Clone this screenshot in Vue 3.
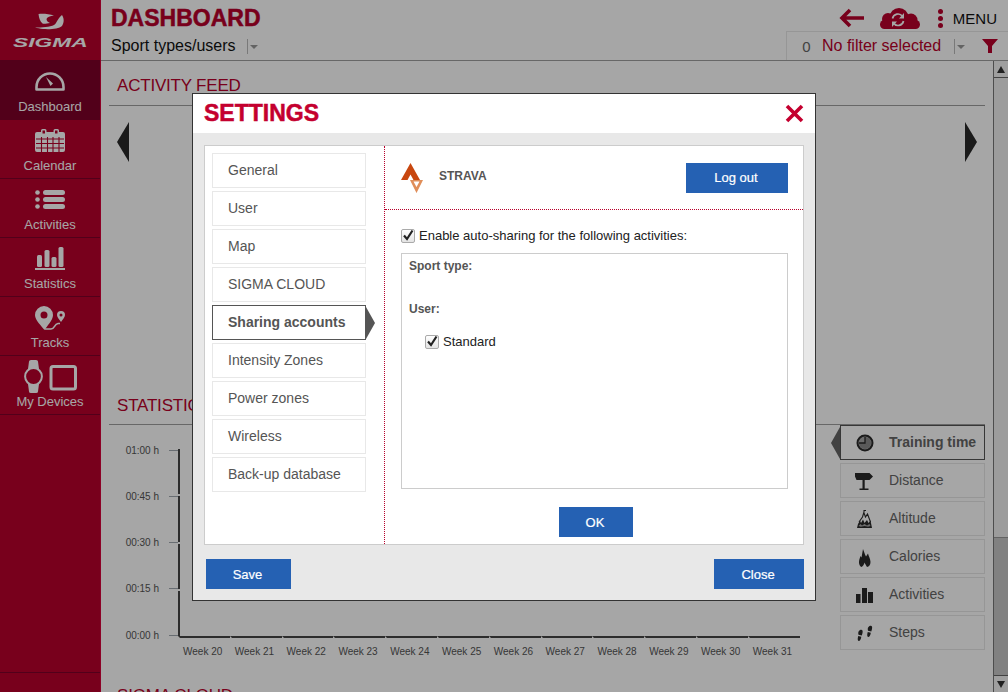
<script setup>
const nav = [
  { label: 'Dashboard', active: true, w: 30, h: 19, svg: '<path d="M1.500 17.500V15A13.500 13.500 0 0 1 28.500 15V17.500Z" fill="none" stroke="#fff" stroke-width="2.600" stroke-linejoin="round"/><path d="M11 5L18 11.500 15.500 14Z" fill="#fff"/>' },
  { label: 'Calendar', w: 30, h: 23, svg: '<path fill="#fff" d="M2 3H6V1.500A1.500 1.500 0 0 1 7.500 0H10A1.500 1.500 0 0 1 11.500 1.500V3H18.500V1.500A1.500 1.500 0 0 1 20 0H22.500A1.500 1.500 0 0 1 24 1.500V3H28A2 2 0 0 1 30 5V21A2 2 0 0 1 28 23H2A2 2 0 0 1 0 21V5A2 2 0 0 1 2 3Z"/><path d="M1 10H29M1 14.500H29M1 19H29M6.500 8V23M12.500 8V23M18 8V23M24 8V23" stroke="#b8002b" stroke-width="1.100"/><path d="M7.500 1.500H10V4.500H7.500ZM20 1.500H22.500V4.500H20Z" fill="#b8002b"/>' },
  { label: 'Activities', w: 30, h: 19, svg: '<circle cx="2.500" cy="2.500" r="2.300" fill="#fff"/><circle cx="2.500" cy="9.500" r="2.300" fill="#fff"/><circle cx="2.500" cy="16.500" r="2.300" fill="#fff"/><rect x="8" y="0" width="22" height="5" rx="2.500" fill="#fff"/><rect x="8" y="7" width="22" height="5" rx="2.500" fill="#fff"/><rect x="8" y="14" width="22" height="5" rx="2.500" fill="#fff"/>' },
  { label: 'Statistics', w: 30, h: 23, svg: '<rect x="2" y="8" width="5" height="12" rx="1.500" fill="#fff"/><rect x="9.500" y="3" width="5" height="17" rx="1.500" fill="#fff"/><rect x="16.500" y="10" width="5" height="10" rx="1.500" fill="#fff"/><rect x="23.500" y="0" width="5" height="20" rx="1.500" fill="#fff"/><rect x="0" y="21" width="30" height="2" fill="#fff"/>' },
  { label: 'Tracks', w: 30, h: 24, svg: '<path fill="#fff" fill-rule="evenodd" d="M9 0A9 9 0 0 1 18 9C18 14 12 20 9.500 24 6.500 20 0 14 0 9A9 9 0 0 1 9 0ZM9 5.500A3.500 3.500 0 1 0 9 12.500 3.500 3.500 0 0 0 9 5.500Z"/><path fill="#fff" fill-rule="evenodd" d="M26 5A4 4 0 0 1 30 9C30 11 27.500 14 26 16 24.500 14 22 11 22 9A4 4 0 0 1 26 5ZM26 7.500A1.500 1.500 0 1 0 26 10.500 1.500 1.500 0 0 0 26 7.500Z"/><path d="M10 23H16C20 23 19 18 23 17.500H25" fill="none" stroke="#fff" stroke-width="1.600"/>' },
  { label: 'My Devices', w: 53, h: 33, svg: '<path fill="#fff" d="M4 9L5 1.500Q5 0 7 0H12Q14 0 14 1.500L15 9ZM4 24H15L14 31.500Q14 33 12 33H7Q5 33 5 31.500Z"/><circle cx="9.500" cy="16.500" r="8.400" fill="#b8002b" stroke="#fff" stroke-width="2"/><rect x="27" y="6.500" width="24.500" height="22.500" rx="2" fill="none" stroke="#fff" stroke-width="3"/>' },
]

const tabs = [
  { label: 'Training time', active: true, svg: '<circle cx="10" cy="10" r="7.500" fill="#a8a8a8" stroke="#2a2a2a" stroke-width="2"/><path d="M10 10V4A6 6 0 0 1 10 16 6 6 0 0 1 4 10Z" fill="#8a8a8a"/><path d="M10 4V10H4" fill="none" stroke="#2a2a2a" stroke-width="1.300"/>' },
  { label: 'Distance', svg: '<path fill="#2a2a2a" d="M0 2H14.500L18 5.500 14.500 9H9.700V17.500H13.500V19H4.500V17.500H7.500V9H1.500L0 5.500Z"/>' },
  { label: 'Altitude', svg: '<path fill="none" stroke="#2a2a2a" stroke-width="1.100" d="M4 13L7.500 8 9 3V1.500H11M9 4L10.500 8 12.500 5 15.500 13"/><path fill="#2a2a2a" fill-rule="evenodd" d="M2 19L3 15 5 11.500 6 14 8 10.500 9.500 14 12 11 13.500 14 15.500 11.500 17 19Z"/><path fill="#a8a8a8" d="M3.500 17L5.500 15 7 16.500 9.500 15 12 16.500 14.500 15 15.500 17 13 17.800 9.500 17 6 17.800Z"/>' },
  { label: 'Calories', svg: '<path fill="#2a2a2a" d="M6.500 20C4 19 3.500 15 4.500 12L5.500 9 6.500 10.500 8 2 10 7.500 11 9.500 13 6.500C13.500 9 15.500 12 15.500 15 15.500 18 14 19.500 12 20 11 18 10 17 9.500 15.500 9 17.500 8 19 6.500 20Z"/>' },
  { label: 'Activities', svg: '<path fill="#2a2a2a" d="M1 9H5.500V18H1ZM7 3H12V18H7ZM13 7H18V18H13Z"/>' },
  { label: 'Steps', svg: '<path fill="#2a2a2a" d="M5 7C7.500 6 8 8 7.500 10L6.800 12.500 3.500 11.800C3 10 3.200 8 5 7ZM3.300 13L6.300 13.700C6 16 5 18 3.800 18 2.500 18 2.500 15 3.300 13ZM14.500 3C17 2 17.500 4 17 6L16.300 8.500 13 7.800C12.500 6 12.700 4 14.500 3ZM12.800 9L15.800 9.700C15.500 12 14.500 14 13.300 14 12 14 12 11 12.800 9Z"/>' },
]

const yLabels = ['01:00 h', '00:45 h', '00:30 h', '00:15 h', '00:00 h']
const weeks = Array.from({ length: 12 }, (_, i) => `Week ${20 + i}`)
const menu = ['General', 'User', 'Map', 'SIGMA CLOUD', 'Sharing accounts', 'Intensity Zones', 'Power zones', 'Wireless', 'Back-up database']
</script>

<template>
  <div class="app">
    <aside class="sidebar">
      <div class="logo">
        <svg class="swoosh" width="30" height="18" viewBox="0 0 30 18">
          <path fill="#fff" d="M3.500 1C8 0.500 14 1 19 2.500 15 3 12 4 11.500 6 11.500 8 13 9 15 10 12 10.500 9 11 7.500 10.500 5 8.500 4 5 3.500 1Z" />
          <path fill="#fff" d="M27 2C29 5 29.500 9 27 13 24 16 15 16.500 8 16 5.500 15.500 2 15 0 14.500 7 14.500 15 14 19 12 22 10 22 6 27 2Z" />
        </svg>
        <div class="brand">SIGMA</div>
      </div>
      <a v-for="n in nav" :key="n.label" class="nav-item" :class="{ active: n.active }">
        <span class="nav-icon">
          <svg :width="n.w" :height="n.h" :viewBox="`0 0 ${n.w} ${n.h}`" v-html="n.svg"></svg>
        </span>
        <span class="nav-label">{{ n.label }}</span>
      </a>
      <div class="sidebar-foot"></div>
    </aside>

    <div class="main">
      <header class="header">
        <div class="head-left">
          <h1 class="title">DASHBOARD</h1>
          <div class="picker">
            <span class="picker-text">Sport types/users</span>
            <span class="caret-box"></span>
          </div>
        </div>
        <div class="head-right">
          <div class="tools">
            <svg width="26" height="20" viewBox="0 0 26 20">
              <path d="M11 2L3 10 11 18M3 10H25" fill="none" stroke="#b8002b" stroke-width="3.600" />
            </svg>
            <svg class="cloud" width="40" height="21" viewBox="0 0 40 21">
              <g fill="#b8002b">
                <circle cx="8" cy="11" r="6" />
                <circle cx="19" cy="9.500" r="9.500" />
                <circle cx="31" cy="12" r="6.500" />
                <rect x="0" y="12" width="40" height="9" rx="4.500" />
              </g>
              <path d="M12.500 10.500A5.500 5.500 0 0 1 22.500 8.500M23.500 13A5.500 5.500 0 0 1 13.500 15" fill="none" stroke="#fff" stroke-width="1.700" />
              <path d="M24 5V10.500H19ZM12 19V13.500H17Z" fill="#fff" />
            </svg>
            <span class="dots"><i></i><i></i><i></i></span>
            <span class="menu-text">MENU</span>
          </div>
          <div class="filter">
            <span class="count">0</span>
            <span class="filter-text">No filter selected</span>
            <span class="caret-box"></span>
            <svg class="funnel" width="16" height="14" viewBox="0 0 16 14">
              <path fill="#b8002b" d="M0 0H16L10 7V14H6V7Z" />
            </svg>
          </div>
        </div>
      </header>

      <div class="below">
        <div class="content">
          <section class="feed">
            <h2 class="section-head">ACTIVITY FEED</h2>
            <div class="carousel">
              <span class="nav-arrow left"></span>
              <span class="nav-arrow right"></span>
            </div>
          </section>

          <section class="stats">
            <h2 class="section-head">STATISTICS</h2>
            <div class="stats-row">
              <div class="chart">
                <div class="yaxis">
                  <div v-for="y in yLabels" :key="y" class="yrow">
                    <span>{{ y }}</span><i></i>
                  </div>
                </div>
                <div class="plot">
                  <div class="vline"><i></i><i></i><i></i><i></i></div>
                  <div class="weeks">
                    <div v-for="w in weeks" :key="w" class="week">{{ w }}</div>
                  </div>
                </div>
              </div>
              <div class="tabs">
                <div v-for="t in tabs" :key="t.label" class="tab" :class="{ active: t.active }">
                  <svg class="tab-icon" width="20" height="20" viewBox="0 0 20 20" v-html="t.svg"></svg>
                  <span class="tab-label">{{ t.label }}</span>
                </div>
              </div>
            </div>
          </section>

          <section>
            <h2 class="section-head cloud-head">SIGMA CLOUD</h2>
          </section>
        </div>

        <div class="scrollbar">
          <div class="sb-btn"><span class="tri up"></span></div>
          <div class="sb-track"></div>
          <div class="sb-thumb"></div>
          <div class="sb-btn bottom"><span class="tri down"></span></div>
        </div>
      </div>
    </div>

    <div class="overlay">
      <div class="dialog">
        <div class="dlg-head">
          <h2 class="dlg-title">SETTINGS</h2>
          <svg width="19" height="19" viewBox="0 0 19 19">
            <path d="M2 2L17 17M17 2L2 17" stroke="#c4002f" stroke-width="3.600" />
          </svg>
        </div>
        <div class="panel">
          <div class="dlg-menu">
            <div v-for="m in menu" :key="m" class="menu-item" :class="{ active: m === 'Sharing accounts' }">{{ m }}</div>
          </div>
          <div class="detail">
            <div class="detail-head">
              <svg class="strava" width="22" height="30" viewBox="0 0 22 30">
                <path fill="#c8470f" d="M9.500 0L19 17H12.500L9.500 11.500 6.500 17H0Z" />
                <path fill="#e08e5a" fill-rule="evenodd" d="M9 17H22L15.500 30ZM12.500 18.500L15.500 24 18.500 18.500Z" />
              </svg>
              <span class="strava-name">STRAVA</span>
              <button class="btn logout">Log out</button>
            </div>
            <div class="detail-body">
              <div class="check-row">
                <span class="check"><svg width="14" height="14" viewBox="0 0 14 14"><path d="M3 6.500L6 10 11.500 1.500" fill="none" stroke="#222" stroke-width="2.200" /></svg></span>
                <span>Enable auto-sharing for the following activities:</span>
              </div>
              <div class="share-box">
                <div class="box-label">Sport type:</div>
                <div class="box-label user">User:</div>
                <div class="check-row standard">
                  <span class="check"><svg width="14" height="14" viewBox="0 0 14 14"><path d="M3 6.500L6 10 11.500 1.500" fill="none" stroke="#222" stroke-width="2.200" /></svg></span>
                  <span>Standard</span>
                </div>
              </div>
              <div class="ok-row"><button class="btn ok">OK</button></div>
            </div>
          </div>
        </div>
        <div class="dlg-foot">
          <button class="btn save">Save</button>
          <button class="btn close">Close</button>
        </div>
      </div>
    </div>
  </div>
</template>

<style scoped>
.app {
  position: relative;
  display: flex;
  width: 1008px;
  height: 692px;
  overflow: hidden;
  background: #fff;
  font-family: "Liberation Sans", Arial, sans-serif;
  color: #666;
}

/* sidebar */
.sidebar {
  flex: none;
  width: 100px;
  display: flex;
  flex-direction: column;
  background: #b8002b;
  border-right: 1px solid #d8003a;
}
.logo {
  height: 60px;
  display: flex;
  flex-direction: column;
  align-items: center;
  padding-top: 13px;
  box-sizing: border-box;
}
.swoosh { display: block; }
.brand {
  margin-top: 6px;
  font-size: 13px;
  line-height: 11px;
  font-style: italic;
  font-weight: bold;
  color: #fff;
  transform: scaleX(1.75);
}
.nav-item {
  height: 59px;
  box-sizing: border-box;
  display: flex;
  flex-direction: column;
  align-items: center;
  border-bottom: 1px solid #7f0028;
  color: #fff;
}
.nav-item.active {
  height: 60px;
  background: #7f0028;
  padding-top: 1px;
}
.nav-icon {
  height: 38px;
  padding-top: 3px;
  box-sizing: border-box;
  display: flex;
  align-items: center;
  justify-content: center;
}
.nav-icon svg { display: block; }
.nav-label {
  font-size: 13px;
  line-height: 16px;
}
.sidebar-foot {
  margin-top: auto;
  height: 19px;
  border-top: 1px solid #7f0028;
}

/* main */
.main {
  flex: 1;
  min-width: 0;
  display: flex;
  flex-direction: column;
}
.header {
  flex: none;
  height: 61px;
  box-sizing: border-box;
  display: flex;
  justify-content: space-between;
  border-bottom: 1px solid #9e9e9e;
}
.head-left { padding-left: 10px; }
.title {
  margin: 0;
  padding-top: 5px;
  font-size: 23px;
  line-height: 26px;
  font-weight: bold;
  color: #b8002b;
  -webkit-text-stroke: 0.5px #b8002b;
}
.picker {
  margin-top: 5px;
  display: flex;
  align-items: center;
  color: #111;
  font-size: 16px;
  line-height: 20px;
}
.caret-box {
  position: relative;
  display: block;
  width: 17px;
  height: 15px;
  margin-left: 11px;
  border-left: 1px solid #bbb;
}
.caret-box::after {
  content: "";
  position: absolute;
  left: 2px;
  top: 6px;
  border: 4px solid transparent;
  border-top: 4px solid #999;
  border-bottom: 0;
}
.head-right {
  width: 222px;
  display: flex;
  flex-direction: column;
}
.tools {
  height: 31px;
  flex: none;
  display: flex;
  align-items: center;
  justify-content: flex-end;
  padding-right: 11px;
  padding-top: 5px;
  box-sizing: border-box;
}
.cloud { margin-left: 15px; }
.dots {
  display: flex;
  flex-direction: column;
  gap: 2px;
  margin-left: 18px;
}
.dots i {
  display: block;
  width: 5px;
  height: 5px;
  border-radius: 50%;
  background: #b8002b;
}
.menu-text {
  margin-left: 10px;
  font-size: 15px;
  color: #111;
}
.filter {
  flex: 1;
  display: flex;
  align-items: center;
  border-top: 1px solid #e6e6e6;
  border-left: 1px solid #e6e6e6;
}
.count {
  width: 35px;
  text-align: center;
  padding-left: 4px;
  box-sizing: border-box;
  font-size: 15px;
  color: #666;
}
.filter-text {
  font-size: 16px;
  color: #b8002b;
}
.filter .caret-box { margin-left: 13px; }
.funnel { margin-left: 10px; }

.below {
  flex: 1;
  min-height: 0;
  display: flex;
}
.content {
  flex: 1;
  min-width: 0;
  padding: 0 8px;
  overflow: hidden;
}
.section-head {
  margin: 0;
  height: 45px;
  box-sizing: border-box;
  padding: 15px 0 0 8px;
  border-bottom: 1px solid #9e9e9e;
  font-size: 17px;
  line-height: 20px;
  font-weight: normal;
  letter-spacing: -0.2px;
  color: #b8002b;
}
.feed { height: 319px; }
.stats .section-head { padding-top: 16px; }
.carousel {
  display: flex;
  justify-content: space-between;
  padding: 16px 8px 0;
}
.nav-arrow {
  display: block;
  border-top: 20px solid transparent;
  border-bottom: 20px solid transparent;
}
.nav-arrow.left { border-right: 12px solid #292929; }
.nav-arrow.right { border-left: 12px solid #292929; }

.stats-row {
  display: flex;
  justify-content: space-between;
  height: 262px;
}
.chart {
  display: flex;
  padding-top: 18px;
}
.yaxis {
  width: 69px;
  height: 199px;
  display: flex;
  flex-direction: column;
  justify-content: space-between;
}
.yrow {
  height: 14px;
  display: flex;
  align-items: center;
  justify-content: flex-end;
  font-size: 10px;
  color: #555;
}
.yrow i {
  display: block;
  width: 9px;
  height: 1px;
  margin-left: 10px;
  background: #a0a8b0;
}
.plot {
  padding-top: 6px;
  width: 622px;
}
.vline {
  height: 187px;
  width: 2px;
  display: flex;
  flex-direction: column;
  gap: 2px;
}
.vline i {
  flex: 1;
  display: block;
  background: #444;
}
.weeks {
  display: flex;
  height: 24px;
}
.week {
  flex: none;
  width: 51.8px;
  box-sizing: border-box;
  padding: 8px 0 0 3px;
  font-size: 10px;
  line-height: 12px;
  color: #555;
  border-top: 2px solid #444;
  border-left: 2px solid #fff;
}
.tabs {
  width: 145px;
  display: flex;
  flex-direction: column;
  gap: 3px;
}
.tab {
  position: relative;
  height: 35px;
  box-sizing: border-box;
  display: flex;
  align-items: center;
  border: 1px solid #e6e6e6;
  font-size: 14px;
  color: #666;
}
.tab-icon {
  margin-left: 14px;
  margin-right: 14px;
  flex: none;
}
.tab-label { margin-top: -2px; }
.tab.active {
  border-color: #555;
  font-weight: bold;
}
.tab.active::before {
  content: "";
  position: absolute;
  left: -10px;
  top: 0;
  bottom: 0;
  margin: auto 0;
  height: 0;
  border-top: 16px solid transparent;
  border-bottom: 16px solid transparent;
  border-right: 9px solid #666;
}
.cloud-head {
  border: 0;
  padding-top: 0;
  margin-top: -1px;
}

/* scrollbar */
.scrollbar {
  flex: none;
  width: 15px;
  display: flex;
  flex-direction: column;
  border-left: 1px solid #777;
  box-sizing: border-box;
  background: #eee;
}
.sb-btn {
  height: 17px;
  flex: none;
  display: flex;
  align-items: center;
  justify-content: center;
  background: #f4f4f4;
  border-bottom: 1px solid #666;
  box-sizing: border-box;
}
.sb-btn.bottom {
  border-bottom: 0;
  border-top: 1px solid #666;
}
.tri {
  display: block;
  border-left: 4px solid transparent;
  border-right: 4px solid transparent;
}
.tri.up { border-bottom: 7px solid #333; }
.tri.down { border-top: 7px solid #333; }
.sb-track { flex: 1; background: #f0f0f0; }
.sb-thumb {
  flex: none;
  height: 138px;
  background: #c6c6c6;
  border-top: 1px solid #999;
  box-sizing: border-box;
}

/* dialog */
.overlay {
  position: absolute;
  inset: 0;
  background: rgba(0, 0, 0, 0.35);
  padding: 93px 0 0 192px;
  box-sizing: border-box;
}
.dialog {
  width: 624px;
  height: 508px;
  box-sizing: border-box;
  border: 1px solid #333;
  background: #e8e8e8;
  display: flex;
  flex-direction: column;
}
.dlg-head {
  flex: none;
  height: 39px;
  background: #fff;
  display: flex;
  align-items: center;
  justify-content: space-between;
  padding: 0 11px;
}
.dlg-title {
  margin: 0;
  padding-bottom: 2px;
  font-size: 23px;
  line-height: 26px;
  font-weight: bold;
  color: #c4002f;
  -webkit-text-stroke: 0.5px #c4002f;
}
.panel {
  flex: none;
  height: 400px;
  margin: 12px 11px 0;
  box-sizing: border-box;
  border: 1px solid #ccc;
  background: #fff;
  display: flex;
}
.dlg-menu {
  flex: none;
  width: 180px;
  box-sizing: border-box;
  padding: 7px 0 0 7px;
  border-right: 1px dotted #b8002b;
  display: flex;
  flex-direction: column;
  gap: 3px;
}
.menu-item {
  position: relative;
  width: 154px;
  height: 35px;
  box-sizing: border-box;
  border: 1px solid #e8e8e8;
  padding-left: 15px;
  font-size: 14px;
  line-height: 32px;
  color: #555;
}
.menu-item.active {
  border-color: #555;
  font-weight: bold;
}
.menu-item.active::after {
  content: "";
  position: absolute;
  right: -10px;
  top: 0;
  bottom: 0;
  margin: auto 0;
  height: 0;
  border-top: 16px solid transparent;
  border-bottom: 16px solid transparent;
  border-left: 9px solid #555;
}
.detail {
  flex: 1;
  min-width: 0;
  display: flex;
  flex-direction: column;
}
.detail-head {
  flex: none;
  height: 64px;
  box-sizing: border-box;
  border-bottom: 1px dotted #b8002b;
  display: flex;
  align-items: center;
  padding: 0 15px 0 16px;
}
.strava { flex: none; }
.strava-name {
  margin-left: 16px;
  padding-bottom: 4px;
  font-size: 12px;
  font-weight: bold;
  color: #555;
}
.btn {
  display: block;
  height: 30px;
  border: 0;
  padding: 0 2px 0 0;
  background: #2561b3;
  color: #fff;
  font-family: inherit;
  font-size: 13px;
  -webkit-text-stroke: 0.2px #fff;
}
.logout {
  width: 102px;
  margin-left: auto;
}
.detail-body {
  flex: 1;
  padding: 18px 15px 0 16px;
}
.check-row {
  display: flex;
  align-items: center;
  gap: 4px;
  height: 15px;
  font-size: 13px;
  line-height: 15px;
  color: #222;
}
.check {
  flex: none;
  display: block;
  width: 14px;
  height: 14px;
  box-sizing: border-box;
  border: 1px solid #aaa;
  border-radius: 2px;
  background: linear-gradient(#fff, #e4e4e4);
}
.check svg { display: block; margin: -1px; }
.share-box {
  margin-top: 10px;
  height: 236px;
  box-sizing: border-box;
  border: 1px solid #ccc;
  padding: 5px 7px;
}
.box-label {
  font-size: 12px;
  line-height: 14px;
  font-weight: bold;
  color: #555;
}
.box-label.user { margin-top: 29px; }
.standard {
  margin: 18px 0 0 16px;
}
.ok-row {
  display: flex;
  justify-content: center;
  margin-top: 18px;
  padding-left: 3px;
}
.ok { width: 74px; }
.dlg-foot {
  flex: 1;
  display: flex;
  justify-content: space-between;
  padding: 14px 11px 0 13px;
}
.save { width: 85px; }
.close { width: 90px; }
</style>
